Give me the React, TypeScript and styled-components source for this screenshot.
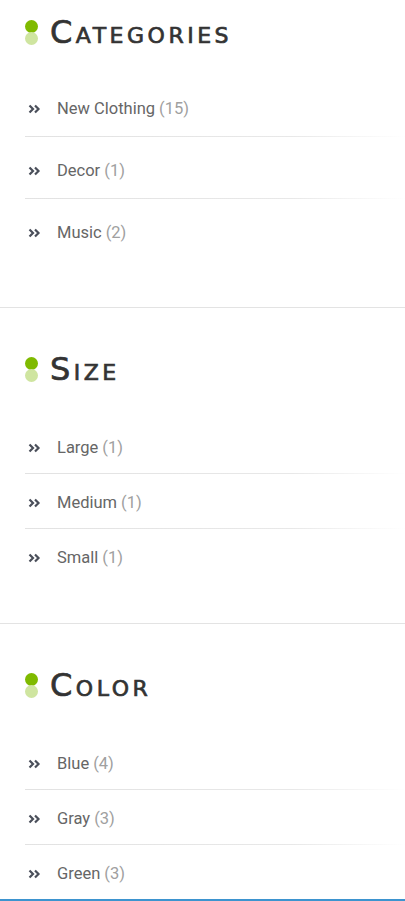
import React from 'react';
import styled, { createGlobalStyle } from 'styled-components';

const GlobalStyle = createGlobalStyle`
  html, body {
    margin: 0;
    padding: 0;
    background: #fff;
  }
  body {
    font-family: Roboto, "Liberation Sans", sans-serif;
  }
`;

const Sidebar = styled.div`
  width: 405px;
  display: flex;
  flex-direction: column;
  border-bottom: 3px solid #3d94cf;
`;

const Widget = styled.section<{ $top: number; $bottom: number; $last?: boolean }>`
  display: flex;
  flex-direction: column;
  padding: ${({ $top }) => $top}px 0 ${({ $bottom }) => $bottom}px 25px;
  border-bottom: ${({ $last }) => ($last ? 'none' : '1px solid #e3e3e3')};
`;

const Heading = styled.h3`
  display: flex;
  align-items: center;
  gap: 12px;
  margin: 0;
  height: 32px;
  font-family: "DejaVu Sans", sans-serif;
  font-size: 32px;
  font-weight: 400;
  font-variant: small-caps;
  letter-spacing: 3.5px;
  color: #333;
  line-height: 32px;
  -webkit-text-stroke: 0.7px #333;
`;

const Dots = styled.span`
  display: flex;
  flex-direction: column;
  width: 13px;
  span {
    display: block;
    width: 13px;
    height: 13px;
    border-radius: 50%;
    background: #7fba00;
  }
  span + span {
    margin-top: -1px;
    background: #cfe5a0;
  }
`;

const List = styled.ul<{ $gap: number }>`
  list-style: none;
  margin: ${({ $gap }) => $gap}px 0 0;
  padding: 0;
`;

const Item = styled.li<{ $tall?: boolean }>`
  display: flex;
  align-items: center;
  gap: 16px;
  padding: ${({ $tall }) => ($tall ? '24px 0 17px 3px' : '19px 0 15px 3px')};
  line-height: 20px;
  font-size: 16.5px;
  color: #666;
  & + & {
    border-top: 1px solid transparent;
    border-image: linear-gradient(to right, #e2e2e2, #e8e8e8 70%, #fff) 1;
  }
`;

const Count = styled.span`
  color: #a0a0a0;
  margin-left: 4px;
`;

const Chevron = () => (
  <svg width="13" height="10" viewBox="0 0 13 10" fill="none">
    <path d="M1.5 1.5 L5 5 L1.5 8.5 M7 1.5 L10.5 5 L7 8.5" stroke="#4a4f5a" strokeWidth="2.2" />
  </svg>
);

type Entry = { name: string; count: number };

const WidgetBlock = ({
  title,
  items,
  tall,
  top,
  gap,
  bottom,
  last
}: {
  title: string;
  items: Entry[];
  tall?: boolean;
  top: number;
  gap: number;
  bottom: number;
  last?: boolean;
}) => (
  <Widget $top={top} $bottom={bottom} $last={last}>
    <Heading>
      <Dots>
        <span />
        <span />
      </Dots>
      {title}
    </Heading>
    <List $gap={gap}>
      {items.map((it) => (
        <Item key={it.name} $tall={tall}>
          <Chevron />
          <span>
            {it.name}
            <Count>({it.count})</Count>
          </span>
        </Item>
      ))}
    </List>
  </Widget>
);

const App = () => (
  <>
    <GlobalStyle />
    <Sidebar>
      <WidgetBlock
        title="Categories"
        tall
        top={16}
        gap={27}
        bottom={47}
        items={[
          { name: 'New Clothing', count: 15 },
          { name: 'Decor', count: 1 },
          { name: 'Music', count: 2 }
        ]}
      />
      <WidgetBlock
        title="Size"
        top={45}
        gap={34}
        bottom={40}
        items={[
          { name: 'Large', count: 1 },
          { name: 'Medium', count: 1 },
          { name: 'Small', count: 1 }
        ]}
      />
      <WidgetBlock
        title="Color"
        top={45}
        gap={34}
        bottom={0}
        last
        items={[
          { name: 'Blue', count: 4 },
          { name: 'Gray', count: 3 },
          { name: 'Green', count: 3 }
        ]}
      />
    </Sidebar>
  </>
);

export default App;
